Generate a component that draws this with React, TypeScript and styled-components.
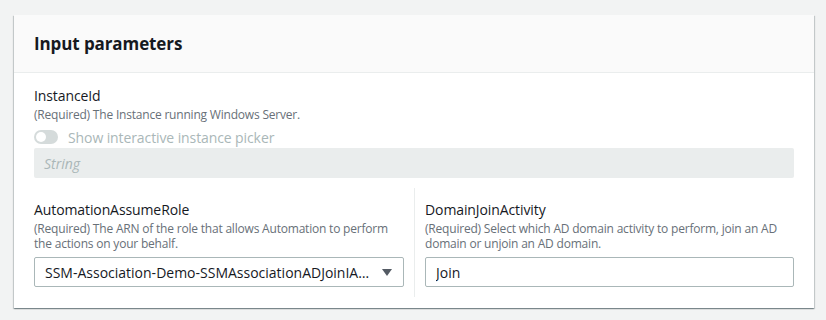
import styled, { createGlobalStyle } from 'styled-components'

const GlobalStyle = createGlobalStyle`
  html, body {
    margin: 0;
    padding: 0;
    background: #f2f3f3;
    font-family: "Open Sans", "Noto Sans", sans-serif;
    color: #16191f;
  }
`

const Page = styled.div`
  padding: 15px 12px 15px 14px;
`

const Card = styled.div`
  width: 800px;
  background: #ffffff;
  box-shadow: 0 1px 1px 0 rgba(0, 28, 36, 0.3), 1px 1px 1px 0 rgba(0, 28, 36, 0.15),
    -1px 1px 1px 0 rgba(0, 28, 36, 0.15);
`

const Header = styled.div`
  background: #fafafa;
  border-bottom: 1px solid #eaeded;
  height: 57px;
  padding: 0 20px;
  display: flex;
  align-items: center;
`

const Title = styled.h2`
  margin: 0;
  font-size: 17px;
  font-weight: 700;
  line-height: 22px;
  letter-spacing: -0.1px;
`

const Body = styled.div`
  padding: 12px 20px 11px 20px;
  display: flex;
  flex-direction: column;
`

const Field = styled.div`
  display: flex;
  flex-direction: column;
`

const Label = styled.div`
  font-size: 14px;
  line-height: 22px;
  letter-spacing: -0.1px;
  color: #16191f;
`

const Description = styled.div`
  font-size: 12px;
  line-height: 15px;
  letter-spacing: -0.2px;
  color: #687078;
`

const ToggleRow = styled.div`
  display: flex;
  align-items: center;
  gap: 10px;
  margin-top: 5px;
  height: 20px;
`

const Track = styled.span`
  position: relative;
  width: 24px;
  height: 14px;
  border-radius: 7px;
  background: #d5dbdb;
`

const Knob = styled.span`
  position: absolute;
  left: 2px;
  top: 2px;
  width: 10px;
  height: 10px;
  border-radius: 50%;
  background: #ffffff;
`

const ToggleText = styled.span`
  font-size: 14px;
  letter-spacing: -0.1px;
  color: #aab7b8;
`

const DisabledInput = styled.div`
  margin-top: 1px;
  height: 30px;
  box-sizing: border-box;
  background: #eaeded;
  border-radius: 2px;
  padding: 0 10px;
  display: flex;
  align-items: center;
  font-size: 14px;
  font-style: italic;
  color: #aab7b8;
`

const Columns = styled.div`
  margin-top: 10px;
  display: grid;
  grid-template-columns: minmax(0, 1fr) minmax(0, 1fr);
`

const Column = styled.div<{ $divider?: boolean }>`
  min-width: 0;
  display: flex;
  flex-direction: column;
  padding: 11px 10px 10px 0;
  ${(p) => p.$divider && 'border-left: 1px solid #eaeded; padding: 11px 0 10px 10px;'}
`

const Box = styled.div`
  margin-top: 6px;
  height: 30px;
  box-sizing: border-box;
  border: 1px solid #aab7b8;
  border-radius: 2px;
  padding: 0 10px 0 10px;
  display: flex;
  align-items: center;
  gap: 10px;
  font-size: 14px;
  color: #16191f;
`

const BoxText = styled.span`
  flex: 1;
  min-width: 0;
  overflow: hidden;
  white-space: nowrap;
  text-overflow: ellipsis;
`

const Caret = () => (
  <svg width="12" height="12" viewBox="0 0 12 12">
    <path d="M1 3h10L6 10z" fill="#545b64" />
  </svg>
)

export default function App() {
  return (
    <>
      <GlobalStyle />
      <Page>
        <Card>
          <Header>
            <Title>Input parameters</Title>
          </Header>
          <Body>
            <Field>
              <Label>InstanceId</Label>
              <Description>(Required) The Instance running Windows Server.</Description>
              <ToggleRow>
                <Track>
                  <Knob />
                </Track>
                <ToggleText>Show interactive instance picker</ToggleText>
              </ToggleRow>
              <DisabledInput>String</DisabledInput>
            </Field>
            <Columns>
              <Column>
                <Label>AutomationAssumeRole</Label>
                <Description>
                  (Required) The ARN of the role that allows Automation to perform the actions on
                  your behalf.
                </Description>
                <Box>
                  <BoxText>SSM-Association-Demo-SSMAssociationADJoinIAMRole-1ABCDEFGH</BoxText>
                  <Caret />
                </Box>
              </Column>
              <Column $divider>
                <Label>DomainJoinActivity</Label>
                <Description>
                  (Required) Select which AD domain activity to perform, join an AD domain or
                  unjoin an AD domain.
                </Description>
                <Box>
                  <BoxText>Join</BoxText>
                </Box>
              </Column>
            </Columns>
          </Body>
        </Card>
      </Page>
    </>
  )
}
